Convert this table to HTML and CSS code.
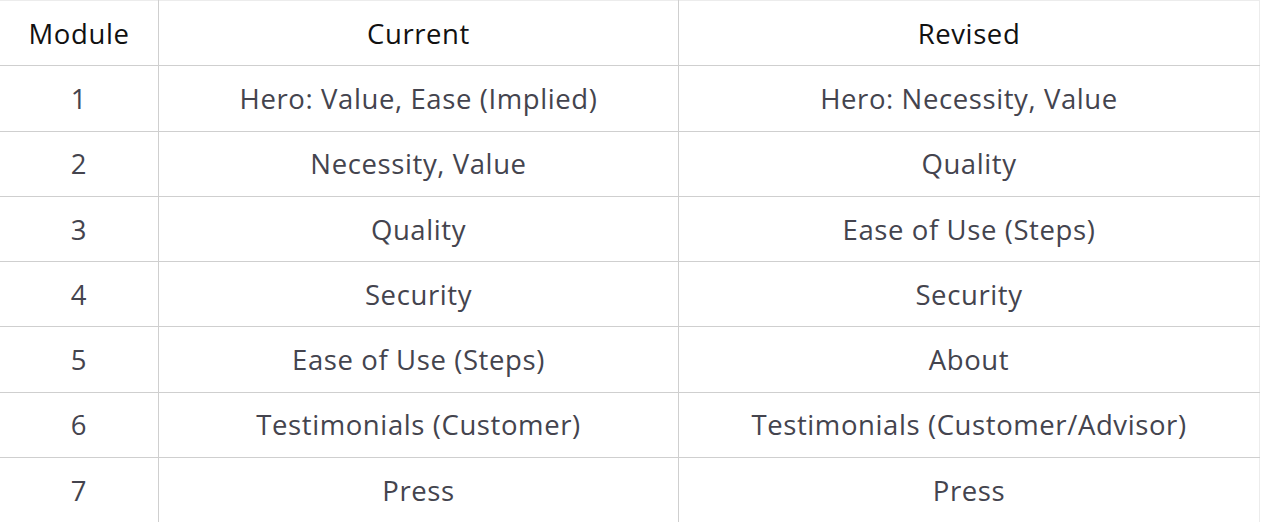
FILE: index.html
```html
<!DOCTYPE html>
<html>
<head>
<meta charset="utf-8">
<link rel="stylesheet" href="styles.css">
</head>
<body>
<table class="grid">
  <thead>
    <tr><th class="c1">Module</th><th class="c2">Current</th><th class="c3">Revised</th></tr>
  </thead>
  <tbody>
    <tr><td>1</td><td>Hero: Value, Ease (Implied)</td><td>Hero: Necessity, Value</td></tr>
    <tr><td>2</td><td>Necessity, Value</td><td>Quality</td></tr>
    <tr><td>3</td><td>Quality</td><td>Ease of Use (Steps)</td></tr>
    <tr><td>4</td><td>Security</td><td>Security</td></tr>
    <tr><td>5</td><td>Ease of Use (Steps)</td><td>About</td></tr>
    <tr><td>6</td><td>Testimonials (Customer)</td><td>Testimonials (Customer/Advisor)</td></tr>
    <tr><td>7</td><td>Press</td><td>Press</td></tr>
  </tbody>
</table>
</body>
</html>
```
FILE: styles.css
```css
html, body {
  margin: 0;
  padding: 0;
  background: #ffffff;
}
.grid {
  border-collapse: collapse;
  width: 1260px;
  table-layout: fixed;
  font-family: "Open Sans", Lato, sans-serif;
  font-size: 27.5px;
  letter-spacing: 0.6px;
  border-top: 1px solid #ececec;
  border-right: 1px solid #ececec;
}
.grid th, .grid td {
  height: 64.3px;
  padding: 0;
  text-align: center;
  vertical-align: middle;
  border-bottom: 1px solid #cfcfcf;
  border-left: 1px solid #cfcfcf;
}
.grid th:first-child, .grid td:first-child {
  border-left: none;
}
.grid th {
  font-weight: 400;
  color: #111111;
}
.grid td {
  color: #44444e;
}
.c1 { width: 158px; }
.c2 { width: 519px; }
.c3 { width: auto; }
```
